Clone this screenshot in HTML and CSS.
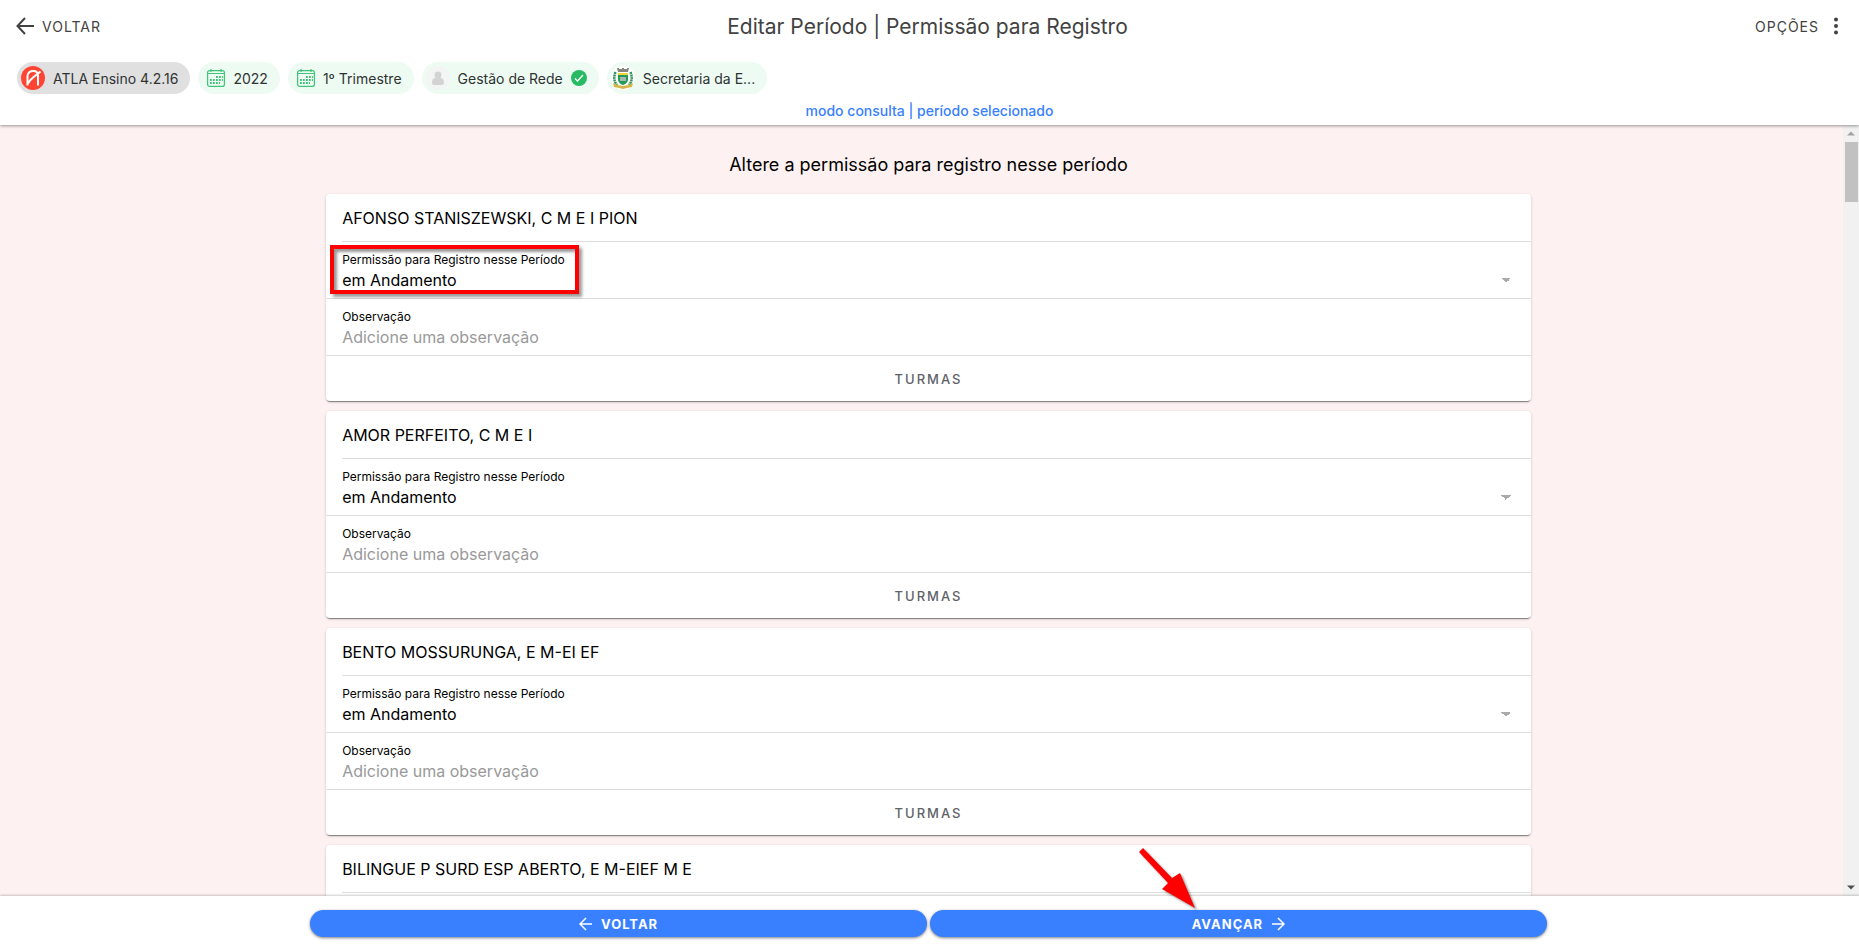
FILE: index.html
```html
<!DOCTYPE html>
<html lang="pt-BR">
  <head>
    <meta charset="UTF-8" />
    <title>Editar Período | Permissão para Registro</title>
    <link rel="stylesheet" href="styles.css">
  </head>
  <body>
    <header class="header">
      <div class="toolbar">
        <button class="toolbar-button">
          <svg class="icon-back" viewBox="0 0 18 18"><path d="M9 1 1.5 9 9 17M1.5 9H18" /></svg>
          VOLTAR
        </button>
        <h1 class="toolbar-title">Editar Período | Permissão para Registro</h1>
        <button class="toolbar-button options">
          OPÇÕES
          <svg class="icon-more" viewBox="0 0 6 18"><circle cx="3" cy="2.500" r="2" /><circle cx="3" cy="9" r="2" /><circle cx="3" cy="15.500" r="2" /></svg>
        </button>
      </div>
      <div class="chips">
        <div class="chip app">
          <svg class="avatar" viewBox="0 0 24 24">
            <circle cx="12" cy="12" r="12" fill="#ff4433" />
            <path d="M6.500 19.500V10Q7 5 12.500 5 17 5 17 9.500V19.500M7 17.500Q9 14 12 11.500L19.500 5.500" fill="none" stroke="#fff" stroke-width="2" />
          </svg>
          <span>ATLA Ensino 4.2.16</span>
        </div>
        <div class="chip">
          <svg class="calendar" viewBox="0 0 18 18"><use href="#calendar" /></svg>
          <span>2022</span>
        </div>
        <div class="chip">
          <svg class="calendar" viewBox="0 0 18 18"><use href="#calendar" /></svg>
          <span>1º Trimestre</span>
        </div>
        <div class="chip">
          <svg class="avatar" viewBox="0 0 24 24">
            <circle cx="12" cy="12" r="12" fill="#f3f5f4" />
            <circle cx="12" cy="9" r="3.500" fill="#d3d3d3" />
            <path d="M6 17Q6 11.500 10 12H14Q18 11.500 18 17 18 19 16 19H8Q6 19 6 17Z" fill="#d3d3d3" />
          </svg>
          <span>Gestão de Rede</span>
          <svg class="check" viewBox="0 0 16 16">
            <circle cx="8" cy="8" r="8" fill="#28ba62" />
            <path d="M4 8.500 6.500 11 12 5" fill="none" stroke="#fff" stroke-width="1.300" />
          </svg>
        </div>
        <div class="chip">
          <svg class="avatar" viewBox="0 0 24 24">
            <circle cx="12" cy="12" r="12" fill="#fff" />
            <path d="M6 2H8V3H11V2H13V3H16V2H18L17 6H7Z" fill="#85857d" />
            <path d="M7 7H17V14Q16 18 12 19 8 18 7 14Z" fill="#229b57" />
            <path d="M7 7H17V9H7Z" fill="#f3d33c" />
            <path d="M9 11H15V15H9Z" fill="#a9b6b2" />
            <path d="M4.500 6Q1.500 14 6 19M19.500 6Q22.500 14 18 19" fill="none" stroke="#35945d" stroke-width="2.500" stroke-dasharray="2 0.500" />
            <path d="M2 17Q7 20 12 20 17 20 22 17L21 21Q15 22 12 23 9 22 3 21Z" fill="#d7b548" />
          </svg>
          <span>Secretaria da E...</span>
        </div>
      </div>
      <p class="mode">modo consulta | período selecionado</p>
    </header>

    <main class="content">
      <div class="column">
        <h2 class="subtitle">Altere a permissão para registro nesse período</h2>

        <section class="card">
          <h3 class="card-title">AFONSO STANISZEWSKI, C M E I PION</h3>
          <div class="field">
            <label for="permissao1">Permissão para Registro nesse Período</label>
            <select id="permissao1"><option>em Andamento</option></select>
            <div class="highlight"></div>
          </div>
          <div class="field">
            <label for="obs1">Observação</label>
            <input type="text" id="obs1" placeholder="Adicione uma observação" />
          </div>
          <button class="turmas">TURMAS</button>
        </section>

        <section class="card">
          <h3 class="card-title">AMOR PERFEITO, C M E I</h3>
          <div class="field">
            <label for="permissao2">Permissão para Registro nesse Período</label>
            <select id="permissao2"><option>em Andamento</option></select>
          </div>
          <div class="field">
            <label for="obs2">Observação</label>
            <input type="text" id="obs2" placeholder="Adicione uma observação" />
          </div>
          <button class="turmas">TURMAS</button>
        </section>

        <section class="card">
          <h3 class="card-title">BENTO MOSSURUNGA, E M-EI EF</h3>
          <div class="field">
            <label for="permissao3">Permissão para Registro nesse Período</label>
            <select id="permissao3"><option>em Andamento</option></select>
          </div>
          <div class="field">
            <label for="obs3">Observação</label>
            <input type="text" id="obs3" placeholder="Adicione uma observação" />
          </div>
          <button class="turmas">TURMAS</button>
        </section>

        <section class="card">
          <h3 class="card-title">BILINGUE P SURD ESP ABERTO, E M-EIEF M E</h3>
          <div class="field"></div>
        </section>
      </div>

      <div class="scrollbar">
        <svg class="scroll-arrow" viewBox="0 0 16 16"><path d="M4 10 8 6 12 10Z" fill="#a3a3a3" /></svg>
        <div class="scroll-thumb"></div>
        <svg class="scroll-arrow" viewBox="0 0 16 16"><path d="M4 6H12L8 10Z" fill="#505050" /></svg>
      </div>
    </main>

    <footer class="footer">
      <div class="footer-buttons">
        <button class="nav-button">
          <svg class="icon-nav" viewBox="0 0 14 14"><path d="M7 1 1 7 7 13M1 7H13" /></svg>
          VOLTAR
        </button>
        <button class="nav-button">
          AVANÇAR
          <svg class="icon-nav" viewBox="0 0 14 14"><path d="M7 1 13 7 7 13M1 7H13" /></svg>
          <svg class="pointer" viewBox="0 0 60 66"><path d="M2 6 6 2 35 32 43 27 58 62 25 43 31 37Z" /></svg>
        </button>
      </div>
    </footer>

    <svg class="symbols">
      <symbol id="calendar" viewBox="0 0 18 18">
        <rect x="0.600" y="1.600" width="16.800" height="15.800" rx="2" fill="none" stroke="#3fc478" stroke-width="1.200" />
        <path d="M1 4.500H17M4 0V3M14 0V3" stroke="#3fc478" stroke-width="1.200" />
        <path d="M9 8H16M3 11H16M3 14H13" stroke="#3fc478" stroke-width="1.800" stroke-dasharray="1.800 1.200" />
      </symbol>
    </svg>
  </body>
</html>
```

FILE: styles.css
```css
* {
  box-sizing: border-box;
}

body {
  margin: 0;
  height: 100vh;
  display: flex;
  flex-direction: column;
  font-family: Inter, "Open Sans", sans-serif;
  overflow: hidden;
}

h1,
h2,
h3,
p {
  margin: 0;
  font-weight: 400;
}

button,
input,
select {
  font-family: inherit;
  border: none;
  background: none;
  padding: 0;
}

/* Header */
.header {
  position: relative;
  z-index: 1;
  background: #fff;
  box-shadow: 0 1px 3px rgba(0, 0, 0, 0.4);
}

.toolbar {
  display: grid;
  grid-template-columns: 1fr auto 1fr;
  align-items: center;
  height: 52px;
  padding: 0 20px 0 16px;
  color: #424242;
}

.toolbar-button {
  display: flex;
  align-items: center;
  gap: 8px;
  font-size: 14px;
  letter-spacing: 1px;
  color: #424242;
}

.options {
  justify-self: end;
  gap: 14px;
}

.toolbar-title {
  font-size: 21px;
}

.icon-back {
  width: 18px;
  height: 18px;
  fill: none;
  stroke: #424242;
  stroke-width: 2;
}

.icon-more {
  width: 6px;
  height: 18px;
  fill: #424242;
}

.chips {
  display: flex;
  gap: 8px;
  padding: 10px 17px 0;
}

.chip {
  display: flex;
  align-items: center;
  gap: 8px;
  height: 32px;
  padding: 0 12px 0 4px;
  border-radius: 16px;
  background: #edfbf3;
  color: #2f3332;
  font-size: 14px;
}

.chip.app {
  background: #e0e0e0;
}

.avatar {
  width: 24px;
  height: 24px;
}

.calendar {
  width: 18px;
  height: 18px;
  margin-left: 5px;
}

.check {
  width: 16px;
  height: 16px;
}

.mode {
  padding: 8px 0 5px;
  text-align: center;
  font-size: 14px;
  line-height: 18px;
  font-weight: 500;
  color: #3880ff;
}

/* Content */
.content {
  position: relative;
  flex: 1;
  padding-right: 2px;
  overflow: hidden;
  background: #fdf2f1;
}

.column {
  width: 66.6%;
  margin: 0 auto;
  padding: 28px 16px 0;
}

.subtitle {
  margin-bottom: 17px;
  text-align: center;
  font-size: 18px;
  line-height: 24px;
}

.card {
  margin-bottom: 10px;
  border-radius: 4px;
  background: #fff;
  box-shadow: 0 2px 1px -1px rgba(0, 0, 0, 0.4), 0 1px 3px rgba(0, 0, 0, 0.2);
}

.card-title {
  height: 48px;
  margin-left: 16px;
  border-bottom: 1px solid #dedede;
  font-size: 16px;
  line-height: 48px;
}

.field {
  position: relative;
  display: flex;
  flex-direction: column;
  height: 57px;
  padding: 10px 16px 0;
  border-bottom: 1px solid #dedede;
}

.field label {
  font-size: 12px;
  line-height: 16px;
}

.field input,
.field select {
  height: 24px;
  font-size: 16px;
  color: #000;
}

.field input::placeholder {
  color: #999;
}

/* Dropdown arrow */
.field select {
  appearance: none;
  background: linear-gradient(135deg, #aaa 50%, transparent 50%) no-repeat right 4px center / 5px 5px,
    linear-gradient(225deg, #aaa 50%, transparent 50%) no-repeat right 9px center / 5px 5px;
}

.highlight {
  position: absolute;
  top: 3px;
  left: 4px;
  width: 249px;
  height: 49px;
  border: 4px solid #f00;
  box-shadow: 3px 3px 3px rgba(0, 0, 0, 0.4), inset 3px 3px 3px rgba(0, 0, 0, 0.4);
}

.turmas {
  display: block;
  width: 100%;
  height: 45px;
  font-size: 13px;
  font-weight: 500;
  letter-spacing: 2px;
  color: #5f6368;
}

/* Scrollbar */
.scrollbar {
  position: absolute;
  top: 0;
  right: 0;
  bottom: 0;
  display: flex;
  flex-direction: column;
  width: 16px;
  background: #f1f1f1;
}

.scroll-arrow {
  width: 16px;
  height: 17px;
}

.scroll-thumb {
  height: 60px;
  margin: 0 1px auto 2px;
  background: #c1c1c1;
}

/* Footer */
.footer {
  position: relative;
  padding: 14px 2px 11px 0;
  background: #fff;
  box-shadow: 0 -1px 2px rgba(0, 0, 0, 0.2);
}

.footer-buttons {
  display: flex;
  gap: 3px;
  width: 66.6%;
  margin: 0 auto;
}

.nav-button {
  position: relative;
  flex: 1;
  display: flex;
  align-items: center;
  justify-content: center;
  gap: 8px;
  height: 27px;
  border-radius: 14px;
  background: #3880ff;
  box-shadow: 0 1px 3px rgba(0, 0, 0, 0.5);
  color: #fff;
  font-size: 13px;
  font-weight: 700;
  letter-spacing: 1px;
}

.icon-nav {
  width: 14px;
  height: 14px;
  fill: none;
  stroke: #fff;
  stroke-width: 1.5;
}

.pointer {
  position: absolute;
  right: 350px;
  bottom: 25px;
  width: 60px;
  height: 66px;
  fill: #f00;
  filter: drop-shadow(2px 2px 1px rgba(0, 0, 0, 0.4));
}

.symbols {
  display: none;
}
```
